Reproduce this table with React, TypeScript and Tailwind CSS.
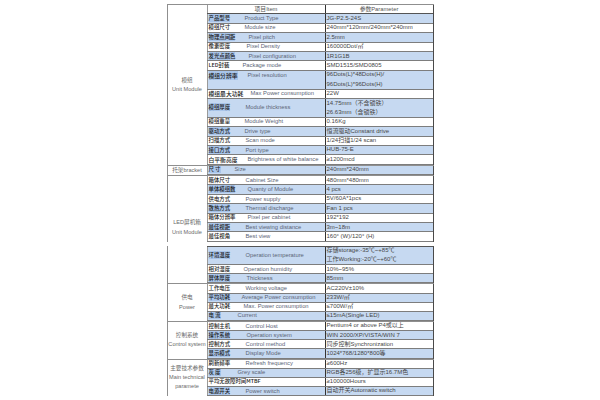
import clsx from "clsx";

type Row = {
  zh: string;
  en?: string;
  val: string | string[];
  zhCls?: string;
  enCls?: string;
  top?: boolean;
};

type Group = {
  label: string[];
  labelCls?: string;
  header?: boolean;
  rows: Row[];
};

const upper: Group[] = [
  {
    label: ["模组", "Unit Module"],
    header: true,
    rows: [
      { zh: "产品型号", en: "Product Type", val: "JG-P2.5-24S" },
      { zh: "模组尺寸", en: "Module size", val: "240mm*120mm/240mm*240mm" },
      { zh: "物理点间距", en: "Pixel pitch", val: "2.5mm", enCls: "ml-[4px]" },
      { zh: "像素密度", en: "Pixel Density", val: "160000Dot/㎡", enCls: "ml-[2px]" },
      { zh: "发光点颜色", en: "Pixel configuration", val: "1R1G1B", enCls: "ml-[4px]" },
      { zh: "LED封装", en: "Package mode", val: "SMD1515/SMD0805", enCls: "ml-[-2px]" },
      {
        zh: "模组分辨率",
        en: "Pixel resolution",
        val: ["96Dots(L)*48Dots(H)/", "96Dots(L)*96Dots(H)"],
        zhCls: "text-[5.8px]",
        enCls: "ml-[3px]",
        top: true,
      },
      { zh: "模组最大功耗", en: "Max Power consumption", val: "22W", zhCls: "text-[5.8px] w-[42px]", enCls: "ml-[0px]" },
      { zh: "模组厚度", en: "Module thickness", val: ["14.75mm（不含锁铁）", "26.63mm（含锁铁）"], enCls: "ml-[1px]" },
      { zh: "模组重量", en: "Module Weight", val: "0.16Kg" },
      { zh: "驱动方式", en: "Drive type", val: "恒流驱动Constant drive" },
      { zh: "扫描方式", en: "Scan mode", val: "1/24扫描1/24 scan", enCls: "ml-[1px]" },
      { zh: "接口方式", en: "Port type", val: "HUB-75-E", enCls: "ml-[1px]" },
      { zh: "白平衡亮度", en: "Brightness of white balance", val: "≥1200mcd", zhCls: "text-[5.8px]", enCls: "ml-[3px]" },
    ],
  },
  {
    label: ["托架bracket"],
    rows: [{ zh: "尺 寸", en: "Size", val: "240mm*240mm", enCls: "ml-[-10px]" }],
  },
  {
    label: ["LED屏机箱", "Unit Module"],
    labelCls: "justify-end pb-[5px]",
    rows: [
      { zh: "箱体尺寸", en: "Cabinet Size", val: "480mm*480mm", enCls: "ml-[1px]" },
      { zh: "单体模组数", en: "Quanty of Module", val: "4 pcs", enCls: "ml-[3px]" },
      { zh: "供电方式", en: "Power supply", val: "5V/60A*1pcs", enCls: "ml-[1px]" },
      { zh: "散热方式", en: "Thermal discharge", val: "Fan 1 pcs", enCls: "ml-[1px]" },
      { zh: "箱体分辨率", en: "Pixel per cabinet", val: "192*192", enCls: "ml-[3px]" },
      { zh: "最佳视距", en: "Best viewing distance", val: "3m~18m", enCls: "ml-[1px]" },
      { zh: "最佳视角", en: "Best view", val: "160° (W)/120° (H)", enCls: "ml-[1px]" },
    ],
  },
];

const lower: Group[] = [
  {
    label: [],
    rows: [
      { zh: "环境温度", en: "Operation temperature", val: ["存储storage:-35℃~+85℃", "工作Working:-20℃~+60℃"], enCls: "ml-[1px]" },
      { zh: "相对湿度", en: "Operation humidity", val: "10%~95%", enCls: "ml-[-1px]" },
      { zh: "屏体厚度", en: "Thickness", val: "85mm", enCls: "ml-[2px]" },
    ],
  },
  {
    label: ["供电", "Power"],
    rows: [
      { zh: "工作电压", en: "Working voltage", val: "AC220V±10%", enCls: "ml-[1px]" },
      { zh: "平均功耗", en: "Average Power consumption", val: "233W/㎡", enCls: "ml-[-3px]" },
      { zh: "最大功耗", en: "Max. Power consumption", val: "≤700W/㎡", enCls: "ml-[-1px]" },
      { zh: "电 流", en: "Current", val: "≤15mA(Single LED)", enCls: "ml-[-7px]" },
    ],
  },
  {
    label: ["控制系统", "Control system"],
    rows: [
      { zh: "控制主机", en: "Control Host", val: "Pentium4 or above P4或以上", enCls: "ml-[1px]" },
      { zh: "操作系统", en: "Operation system", val: "WIN 2000/XP/VISTA/WIN 7", enCls: "ml-[2px]" },
      { zh: "控制方式", en: "Control method", val: "同步控制Synchronization", enCls: "ml-[1px]" },
      { zh: "显示模式", en: "Display Mode", val: "1024*768/1280*800等", enCls: "ml-[1px]" },
    ],
  },
  {
    label: ["主要技术参数", "Main technical", "paramete"],
    rows: [
      { zh: "刷新频率", en: "Refresh frequency", val: "≥600Hz", enCls: "ml-[1px]" },
      { zh: "灰 度", en: "Grey scale", val: "RGB各256级，扩显示16.7M色", enCls: "ml-[-7px]" },
      { zh: "平均无故障时间MTBF", val: "≥100000Hours" },
      { zh: "电源开关", en: "Power switch", val: "自动开关Automatic switch", enCls: "ml-[1px]" },
    ],
  },
];

const EN = "font-['Liberation_Sans','Noto_Sans_CJK_SC',sans-serif]";
const ZH = "font-['Noto_Sans_CJK_SC',sans-serif]";

function SpecRow({ row, blue, tight }: { row: Row; blue: boolean; tight?: boolean }) {
  const lines = Array.isArray(row.val) ? row.val : [row.val];
  const h = tight
    ? lines.length === 2
      ? "h-[18.3px]"
      : "h-[9.15px]"
    : lines.length === 2
      ? "h-[18.8px]"
      : "h-[9.4px]";
  return (
    <div className={clsx("flex border-b border-[#7d7d7d]", h, blue ? "bg-[#c6d9f1]" : "bg-white")}>
      <div
        className={clsx(
          "w-[118px] shrink-0 flex pl-px border-l border-[#9a9a9a] whitespace-nowrap overflow-hidden",
          row.top ? "items-start" : "items-center"
        )}
      >
        <span
          className={clsx(
            ZH,
            "text-[5.4px] leading-[9px] text-[#1d1d1d] font-medium",
            row.en && "w-[36px] shrink-0",
            row.zhCls
          )}
        >
          <span className={blue ? "bg-[#a9c5ea]" : ""}>{row.zh}</span>
        </span>
        {row.en && (
          <span className={clsx(EN, "text-[5.8px] leading-[9px] text-[#5b6477]", row.enCls)}>{row.en}</span>
        )}
      </div>
      <div className="flex-1 flex flex-col justify-center pl-px border-l border-[#333] overflow-hidden">
        {lines.map((l) => (
          <span key={l} className={clsx(EN, "text-[6px] leading-[9.2px] text-[#474747] whitespace-nowrap")}>
            {l}
          </span>
        ))}
      </div>
    </div>
  );
}

function Section({ groups, first }: { groups: Group[]; first?: boolean }) {
  let i = 0;
  return (
    <div className={clsx("flex flex-col", first ? "border-t border-[#8f8f8f]" : "")}>
      {groups.map((g, gi) => (
        <div key={gi} className={clsx("flex", gi < groups.length - 1 && "border-b border-[#8f8f8f]")}>
          <div
            className={clsx(
              "w-[40px] shrink-0 flex flex-col items-center border-l border-[#8f8f8f] text-[#6a6a6a] text-center",
              g.labelCls ?? "justify-center"
            )}
          >
            {g.label.map((t) => (
              <span key={t} className={clsx(EN, "text-[5.6px] leading-[9.2px] whitespace-nowrap")}>
                {t}
              </span>
            ))}
          </div>
          <div className={clsx("flex-1 flex flex-col border-r border-[#4a4a4a]", !first && gi === 0 && "border-t border-t-[#555]")}>
            {g.header && (
              <div className="flex h-[9.4px] border-b border-[#555] bg-white">
                <div className={clsx(EN, "w-[118px] shrink-0 border-l border-[#9a9a9a] text-center text-[5.8px] leading-[9px] text-[#555]")}>
                  项目Item
                </div>
                <div className={clsx(EN, "flex-1 border-l border-[#333] text-center text-[5.8px] leading-[9px] text-[#555]")}>
                  参数Parameter
                </div>
              </div>
            )}
            {g.rows.map((r) => {
              const blue = i % 2 === 0;
              i += 1;
              return <SpecRow key={r.zh} row={r} blue={blue} tight={!first} />;
            })}
          </div>
        </div>
      ))}
    </div>
  );
}

export default function App() {
  return (
    <div className="w-[600px] h-[400px] bg-white overflow-hidden pt-[4px]">
      <div className="w-[267px] mx-auto flex flex-col gap-[4px]">
        <Section groups={upper} first />
        <Section groups={lower} />
      </div>
    </div>
  );
}
